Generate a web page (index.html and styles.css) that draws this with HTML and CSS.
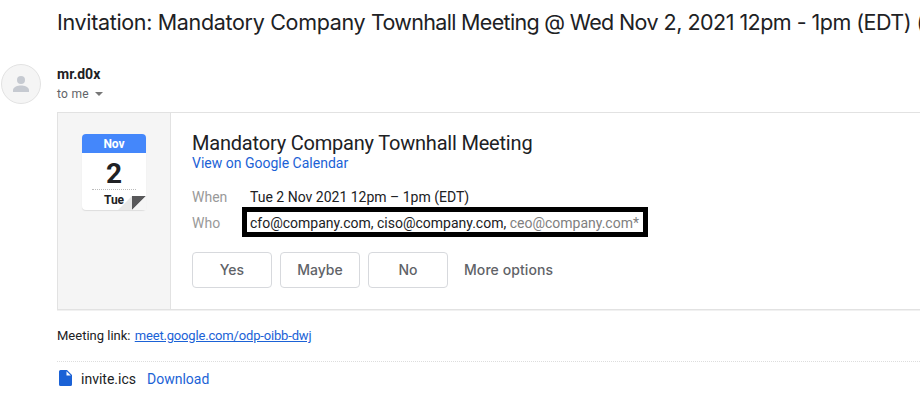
FILE: index.html
```html
<!DOCTYPE html>
<html lang="en">
<head>
<meta charset="utf-8">
<title>Invitation</title>
<link rel="stylesheet" href="styles.css">
</head>
<body>
<main class="mail">
  <h1 class="subject"><span>Invitation: Mandatory Company </span><span class="mid">Townhall Meeting @ Wed </span><span class="end">Nov 2, 2021 12pm - 1pm (EDT) (</span></h1>
  <header class="sender">
    <svg class="avatar" viewBox="0 0 40 40"><circle cx="20" cy="20" r="19.5" fill="#f5f5f5" stroke="#e2e2e2"/><circle cx="20" cy="16" r="4" fill="#c6cad1"/><path d="M12 28v-2c0-3.2 5-4.500 8-4.500s8 1.300 8 4.500v2z" fill="#c6cad1"/></svg>
    <div class="from">
      <div class="name">mr.d0x</div>
      <div class="to">to me <i class="caret"></i></div>
    </div>
  </header>
  <section class="card">
    <aside class="side">
      <div class="cal">
        <div class="month">Nov</div>
        <div class="day">2</div>
        <div class="weekday">Tue</div>
        <svg class="fold" viewBox="0 0 28 14"><path d="M0 14 14 0v14z" fill="#e8e8e8"/><path d="M14 0h14L14 14z" fill="#58585a"/><path d="M28 0v15H13z" fill="#f5f5f5"/></svg>
      </div>
    </aside>
    <div class="event">
      <h2 class="title">Mandatory Company Townhall Meeting</h2>
      <a class="view">View on Google Calendar</a>
      <div class="row when"><span class="label">When</span><span class="time">Tue 2 Nov 2021 12pm – 1pm (EDT)</span></div>
      <div class="row who"><span class="label">Who</span><div class="guests"><span class="people">cfo@company.com, ciso@company.com, <span class="optional">ceo@company.com*</span></span></div></div>
      <div class="actions"><button>Yes</button><button>Maybe</button><button>No</button><span class="more">More options</span></div>
    </div>
  </section>
  <p class="meeting">Meeting link: <a>meet.google.com/odp-oibb-dwj</a></p>
  <footer class="file">
    <svg class="doc" viewBox="0 0 13 16"><path d="M1.500 0H8l5 5v9.500a1.500 1.500 0 0 1-1.500 1.500h-10A1.500 1.500 0 0 1 0 14.500v-13A1.500 1.500 0 0 1 1.500 0z" fill="#1b62d6"/><path d="M7.500 1.200V5.500h4.300z" fill="#fff"/></svg>
    <span class="filename">invite.ics</span><a class="download">Download</a>
  </footer>
</main>
</body>
</html>
```
FILE: styles.css
```css
* { box-sizing: border-box; }
body { margin: 0; background: #fff; color: #202124; font-family: Roboto, "Liberation Sans", sans-serif; overflow: hidden; }
h1, h2, p { margin: 0; font-weight: 400; }
.mail { height: 404px; width: 920px; overflow: hidden; }
.subject { height: 64px; padding: 7px 0 0 57px; font: 400 21.5px/30px Inter, sans-serif; white-space: pre; letter-spacing: -.33px; }
.mid { letter-spacing: -.68px; }
.end { letter-spacing: -.52px; }
.sender { display: flex; height: 48px; gap: 16px; padding-left: 1px; }
.avatar { width: 40px; height: 40px; }
.name { font-size: 14px; font-weight: 700; line-height: 20px; }
.to { font-size: 12px; line-height: 20px; color: #5f6368; letter-spacing: .3px; display: flex; align-items: center; gap: 6px; }
.caret { border: 4px solid transparent; border-top-color: #777; border-bottom: 0; }
.card { display: flex; height: 198px; margin-left: 57px; border: 1px solid #e2e2e2; border-right: 0; box-shadow: 0 1px 0 #f1f1f1; }
.side { width: 113px; background: #f5f5f5; border-right: 1px solid #e2e2e2; padding: 21px 0 0 24px; }
.cal { position: relative; width: 64px; height: 76px; background: #fff; border-radius: 4px; text-align: center; font-weight: 700; box-shadow: 0 1px 1px #ddd; }
.month { height: 19px; background: #4487fb; color: #fff; font-size: 12px; line-height: 20px; border-radius: 4px 4px 0 0; }
.day { margin: 0 10px; height: 37px; border-bottom: 1px dotted #bbb; font-size: 28px; line-height: 41px; }
.weekday { font-size: 12px; line-height: 20px; position: relative; z-index: 1; }
.fold { position: absolute; right: 0; bottom: 0; width: 28px; height: 14px; }
.event { padding: 18px 0 0 21px; }
.title { font-size: 20px; line-height: 24px; letter-spacing: -.2px; }
.view { display: block; font-size: 14px; line-height: 16px; color: #1b62d6; }
.row { display: flex; align-items: center; font-size: 14px; }
.when { height: 20px; margin-top: 16px; }
.who { height: 30px; }
.label { width: 58px; color: #999; }
.who .label { width: 50px; padding-top: 2px; }
.guests { height: 30px; width: 406px; border: 5px solid #000; padding-left: 3px; line-height: 22px; white-space: nowrap; }
.optional { color: #808080; }
.actions { display: flex; align-items: center; gap: 8px; margin-top: 15px; font: 500 14px Inter, sans-serif; color: #5f6368; }
button { width: 80px; height: 36px; padding: 0 0 2px; background: #fff; border: 1px solid #d7d9dd; border-radius: 4px; font: inherit; color: inherit; }
.more { margin-left: 8px; padding-bottom: 2px; letter-spacing: .08px; }
.meeting { margin: 17px 0 0 57px; height: 34px; font-size: 13px; line-height: 18px; }
.meeting a { color: #1b62d6; text-decoration: underline; letter-spacing: -.17px; margin-left: 1px; }
.file { margin-left: 57px; border-top: 1px dotted #ddd; display: flex; align-items: center; height: 34px; font-size: 14px; padding-left: 2px; }
.doc { width: 13px; height: 16px; margin: 0 9px 2px 0; }
.download { color: #1b62d6; margin-left: 11px; }
```
